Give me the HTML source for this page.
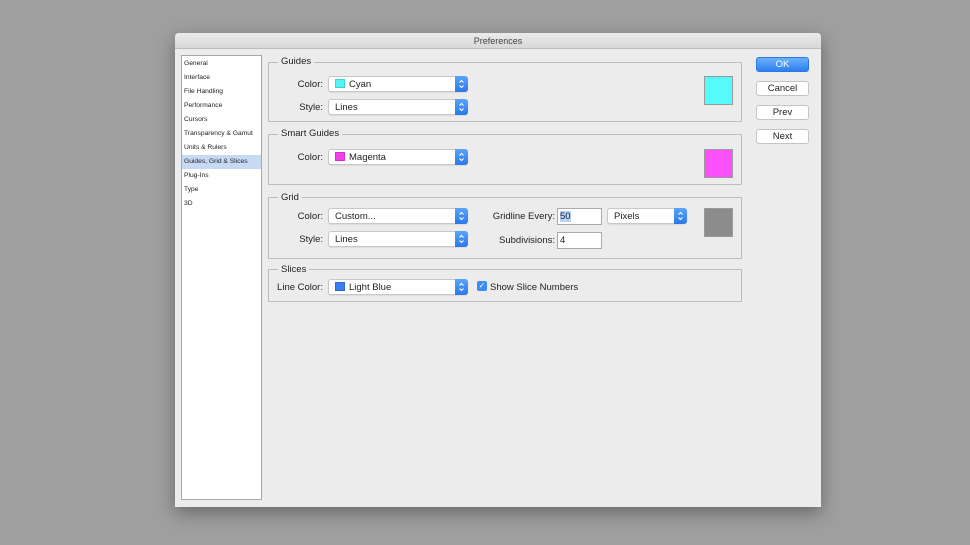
<!DOCTYPE html>
<html><head><style>
*{margin:0;padding:0;box-sizing:border-box}
body{width:970px;height:545px;background:#9f9f9f;font-family:"Liberation Sans",sans-serif;position:relative;overflow:hidden}
.a{position:absolute}
#dlg{left:175px;top:33px;width:646px;height:474px;background:#ececec;border-radius:4px 4px 0 0;box-shadow:0 6px 18px rgba(0,0,0,.35)}
#title{left:175px;top:33px;width:646px;height:16px;background:linear-gradient(#ebebeb,#d8d8d8);border-bottom:1px solid #bdbdbd;border-radius:4px 4px 0 0;font-size:9px;color:#444;text-align:center;line-height:16px}
#side{left:181px;top:55px;width:81px;height:445px;background:#fff;border:1px solid #a9a9a9}
.it{position:absolute;left:2px;font-size:6.7px;color:#222;height:14px;line-height:14px;width:77px}
.sel{background:#c6daf4}
.grp{position:absolute;left:268px;width:474px;border:1px solid #bcbcbc;border-radius:1px}
.gt{position:absolute;font-size:9.5px;color:#222;background:#ececec;padding:0 3px;left:278px}
.lb{position:absolute;font-size:9.5px;color:#222;text-align:right}
.sl{position:absolute;left:328px;width:140px;height:16px;background:#fff;border:1px solid #c8c8c8;border-radius:3px;font-size:9.5px;color:#222;line-height:16px;padding-left:6px;box-shadow:0 1px 1px rgba(0,0,0,.08)}
.sl .st{position:absolute;right:-1px;top:-1px;width:13px;height:16px;background:linear-gradient(#5aa4f8,#2a78ea);border-radius:0 3px 3px 0}
.sw{display:inline-block;width:10px;height:9px;vertical-align:-1px;margin-right:4px;border:1px solid rgba(0,0,0,.15)}
.big{position:absolute;left:704px;width:29px;height:29px;border:1px solid #9a9a9a}
.btn{position:absolute;left:756px;width:53px;height:15px;background:#fff;border:1px solid #c4c4c4;border-radius:3px;font-size:9.5px;color:#222;text-align:center;line-height:14px}
.tf{position:absolute;height:17px;background:#fff;border:1px solid #aaa;font-size:9.5px;line-height:15px;padding-left:2px;color:#222}
</style></head><body>
<svg width="0" height="0" style="position:absolute"><defs><symbol id="ar" viewBox="0 0 13 16"><path d="M4.5 6.5L6.5 4.5L8.5 6.5M4.5 9.5L6.5 11.5L8.5 9.5" fill="none" stroke="#fff" stroke-width="1.1"/></symbol></defs></svg>
<div id="dlg" class="a"></div>
<div id="title" class="a">Preferences</div>
<div id="side" class="a">
<div class="it" style="top:1px">General</div>
<div class="it" style="top:15px">Interface</div>
<div class="it" style="top:29px">File Handling</div>
<div class="it" style="top:43px">Performance</div>
<div class="it" style="top:57px">Cursors</div>
<div class="it" style="top:71px">Transparency &amp; Gamut</div>
<div class="it" style="top:85px">Units &amp; Rulers</div>
<div class="it sel" style="top:99px;left:0;padding-left:2px;width:79px">Guides, Grid &amp; Slices</div>
<div class="it" style="top:113px">Plug-Ins</div>
<div class="it" style="top:127px">Type</div>
<div class="it" style="top:141px">3D</div>
</div>

<div class="grp" style="top:62px;height:60px"></div>
<div class="gt" style="top:56px">Guides</div>
<div class="lb" style="left:280px;width:43px;top:79px">Color:</div>
<div class="sl" style="top:76px"><span class="sw" style="background:#52f5f5"></span>Cyan<svg class="st"><use href="#ar"/></svg></div>
<div class="lb" style="left:280px;width:43px;top:102px">Style:</div>
<div class="sl" style="top:99px">Lines<svg class="st"><use href="#ar"/></svg></div>
<div class="big" style="top:76px;background:#55fbfb"></div>

<div class="grp" style="top:134px;height:51px"></div>
<div class="gt" style="top:128px">Smart Guides</div>
<div class="lb" style="left:280px;width:43px;top:152px">Color:</div>
<div class="sl" style="top:149px"><span class="sw" style="background:#f53ef0"></span>Magenta<svg class="st"><use href="#ar"/></svg></div>
<div class="big" style="top:149px;background:#fb50fb"></div>

<div class="grp" style="top:197px;height:62px"></div>
<div class="gt" style="top:192px">Grid</div>
<div class="lb" style="left:280px;width:43px;top:211px">Color:</div>
<div class="sl" style="top:208px">Custom...<svg class="st"><use href="#ar"/></svg></div>
<div class="lb" style="left:280px;width:43px;top:234px">Style:</div>
<div class="sl" style="top:231px">Lines<svg class="st"><use href="#ar"/></svg></div>
<div class="lb" style="left:480px;width:75px;top:211px">Gridline Every:</div>
<div class="tf" style="left:557px;top:208px;width:45px"><span style="background:#b5d3fb">50</span></div>
<div class="lb" style="left:480px;width:75px;top:235px">Subdivisions:</div>
<div class="tf" style="left:557px;top:232px;width:45px">4</div>
<div class="sl" style="top:208px;left:607px;width:80px">Pixels<svg class="st"><use href="#ar"/></svg></div>
<div class="big" style="top:208px;background:#8c8c8c"></div>

<div class="grp" style="top:269px;height:33px"></div>
<div class="gt" style="top:264px">Slices</div>
<div class="lb" style="left:270px;width:53px;top:282px">Line Color:</div>
<div class="sl" style="top:279px"><span class="sw" style="background:#3b7cf5"></span>Light Blue<svg class="st"><use href="#ar"/></svg></div>
<div class="a" style="left:477px;top:281px;width:10px;height:10px;background:#3d8df5;border-radius:2px;color:#fff;font-size:8px;line-height:10px;text-align:center">✓</div>
<div class="lb" style="left:490px;top:282px">Show Slice Numbers</div>

<div class="btn" style="top:57px;background:linear-gradient(#6bb0fb,#2d7ff0);border-color:#2a78e4;color:#fff">OK</div>
<div class="btn" style="top:81px">Cancel</div>
<div class="btn" style="top:105px">Prev</div>
<div class="btn" style="top:129px">Next</div>
</body></html>
